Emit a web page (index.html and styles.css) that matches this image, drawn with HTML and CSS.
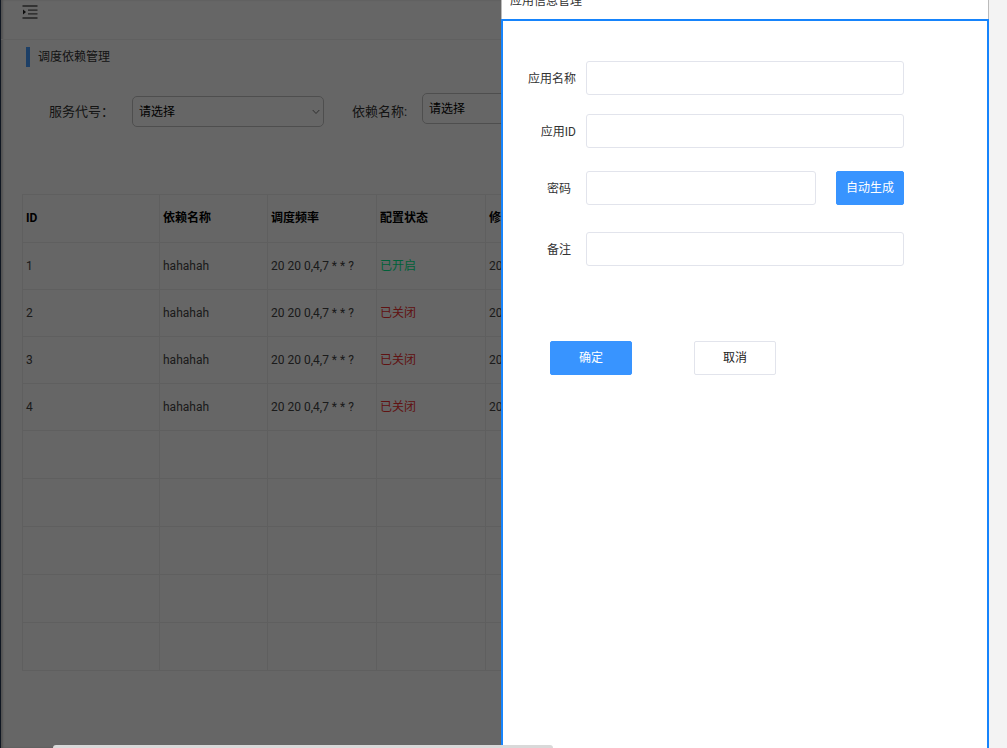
FILE: index.html
```html
<!DOCTYPE html>
<html lang="zh-CN">
<head>
<meta charset="utf-8">
<title>调度依赖管理</title>
<link rel="stylesheet" href="styles.css">
</head>
<body>
<div class="screen">
  <main class="page">
    <header class="topbar">
      <button class="menu-toggle" type="button" aria-label="展开菜单">
        <svg width="16" height="14" viewBox="0 0 16 14" fill="none" stroke="#555" stroke-width="1.3">
          <path d="M0.500 1h15M6 5.100h9.500M6 8.900h9.500M0.500 13h15"/>
          <path d="M1 4.500L4 7L1 9.500z" fill="#222" stroke="none"/>
        </svg>
      </button>
    </header>
    <h1 class="page-title">调度依赖管理</h1>
    <div class="filters">
      <label class="filter-label" for="service">服务代号：</label>
      <div class="select-box select-low">
        <select id="service"><option>请选择</option></select>
        <svg class="chevron" width="8" height="6" viewBox="0 0 8 6" fill="none" stroke="#777"><path d="M0.700 1L4 4.500L7.300 1"/></svg>
      </div>
      <label class="filter-label filter-next" for="dependency">依赖名称:</label>
      <div class="select-box">
        <select id="dependency"><option>请选择</option></select>
        <svg class="chevron" width="8" height="6" viewBox="0 0 8 6" fill="none" stroke="#777"><path d="M0.700 1L4 4.500L7.300 1"/></svg>
      </div>
    </div>
    <table class="grid">
      <colgroup><col class="col-id"><col class="col-name"><col class="col"><col class="col"><col></colgroup>
      <thead>
        <tr><th>ID</th><th>依赖名称</th><th>调度频率</th><th>配置状态</th><th>修</th></tr>
      </thead>
      <tbody>
        <tr><td>1</td><td>hahahah</td><td>20 20 0,4,7 * * ?</td><td class="on">已开启</td><td>20</td></tr>
        <tr><td>2</td><td>hahahah</td><td>20 20 0,4,7 * * ?</td><td class="off">已关闭</td><td>20</td></tr>
        <tr><td>3</td><td>hahahah</td><td>20 20 0,4,7 * * ?</td><td class="off">已关闭</td><td>20</td></tr>
        <tr><td>4</td><td>hahahah</td><td>20 20 0,4,7 * * ?</td><td class="off">已关闭</td><td>20</td></tr>
      </tbody>
      <tbody class="blank">
        <tr><td></td><td></td><td></td><td></td><td></td></tr>
        <tr><td></td><td></td><td></td><td></td><td></td></tr>
        <tr><td></td><td></td><td></td><td></td><td></td></tr>
        <tr><td></td><td></td><td></td><td></td><td></td></tr>
        <tr><td></td><td></td><td></td><td></td><td></td></tr>
      </tbody>
    </table>
  </main>
  <div class="mask"></div>
  <section class="drawer">
    <header class="drawer-head"><h2>应用信息管理</h2></header>
    <form class="drawer-body">
      <div class="row">
        <label for="app-name">应用名称</label>
        <input id="app-name" type="text">
      </div>
      <div class="row row-near">
        <label for="app-id">应用ID</label>
        <input id="app-id" type="text">
      </div>
      <div class="row row-mid">
        <label class="short" for="password">密码</label>
        <input id="password" type="password">
        <button class="btn primary generate" type="button">自动生成</button>
      </div>
      <div class="row row-far">
        <label class="short" for="remark">备注</label>
        <input id="remark" type="text">
      </div>
      <div class="actions">
        <button class="btn primary" type="button">确定</button>
        <button class="btn" type="button">取消</button>
      </div>
    </form>
  </section>
  <div class="scrollbar"></div>
</div>
</body>
</html>
```
FILE: styles.css
```css
* { box-sizing: border-box; }

body {
  margin: 0;
  background: #f3f3f3;
  color: #333;
  font: 12px/18px Roboto, "Noto Sans CJK SC", sans-serif;
}

button, input, select { font: inherit; color: inherit; }

.screen {
  position: relative;
  min-height: 100vh;
  margin-right: 18px;
  overflow: hidden;
}

.page {
  min-height: 100vh;
  background: #fff;
  border-left: 1px solid #2a3a55;
  box-shadow: inset 2px 0 2px #ccc;
}

.topbar {
  display: flex;
  height: 40px;
  padding: 5px 0 0 21px;
  border-bottom: 1px solid #f0f0f0;
}

.menu-toggle {
  display: flex;
  height: 14px;
  padding: 0;
  border: 0;
  background: none;
}

.page-title {
  margin: 7px 0 0 25px;
  padding-left: 8px;
  border-left: 4px solid #4a9eff;
  font-size: 12px;
  line-height: 20px;
  font-weight: 400;
}

.filters {
  display: flex;
  align-items: center;
  height: 34px;
  margin: 26px 0 0 48px;
}

.filter-label {
  width: 83px;
  font-size: 13px;
  white-space: nowrap;
  padding-top: 4px;
}

.filter-next { width: 70px; margin-left: 28px; }

.select-box {
  position: relative;
  align-self: flex-start;
  width: 192px;
}

.select-low { align-self: flex-end; }

.select-box select {
  display: block;
  width: 100%;
  height: 31px;
  padding: 0 6px;
  border: 1px solid #c4c4c4;
  border-radius: 5px;
  background: #fff;
  color: #000;
  appearance: none;
}

.chevron { position: absolute; right: 4px; top: 13px; }

.grid {
  width: calc(100% - 42px);
  margin: 67px 21px 0;
  border-collapse: collapse;
  table-layout: fixed;
}

.col-id { width: 137px; }
.col-name { width: 108px; }
.col { width: 109px; }

.grid th, .grid td {
  height: 47px;
  padding: 0 3px;
  border: 1px solid #ededed;
  color: #444;
  text-align: left;
}

.grid th { height: 48px; padding-bottom: 2px; color: #000; font-weight: 700; }
.grid .blank td { height: 48px; }
.grid .on { color: #00f090; }
.grid .off { color: #f03030; }

.mask {
  position: absolute;
  inset: 0;
  background: rgba(0, 0, 0, 0.6);
}

.drawer {
  position: absolute;
  inset: 0 0 0 auto;
  display: flex;
  flex-direction: column;
  width: 488px;
  background: #fff;
}

.drawer-head {
  display: flex;
  align-items: flex-end;
  height: 19px;
  padding: 0 8px 9px;
  border: solid #bbb;
  border-width: 0 1px;
}

.drawer-head h2 { margin: 0; font-size: 12px; font-weight: 400; }

.drawer-body {
  flex: 1;
  padding: 40px 0 0 16px;
  border: 2px solid #1684fc;
  border-bottom: 0;
}

.row {
  display: flex;
  align-items: center;
  width: 385px;
}

.row-near { margin-top: 19px; }
.row-mid { margin-top: 23px; }
.row-far { margin-top: 27px; }

.row label {
  width: 57px;
  margin-right: 10px;
  padding-top: 2px;
  text-align: right;
}

.row label.short { padding-right: 5px; }

.row input {
  flex: 1;
  min-width: 0;
  height: 34px;
  border: 1px solid #e2e4ec;
  border-radius: 3px;
  background: #fff;
}

.btn {
  width: 82px;
  height: 34px;
  padding: 0;
  border: 1px solid #e2e4ec;
  border-radius: 2px;
  background: #fff;
  color: #222;
}

.primary { border-color: #3894ff; background: #3894ff; color: #fff; }

.generate { width: 68px; margin-left: 20px; }

.actions {
  display: flex;
  gap: 62px;
  margin: 75px 0 0 31px;
}

.scrollbar {
  position: absolute;
  left: 53px;
  bottom: 0;
  width: 500px;
  height: 3px;
  border-radius: 3px 3px 0 0;
  background: #d9d9d9;
}
```
